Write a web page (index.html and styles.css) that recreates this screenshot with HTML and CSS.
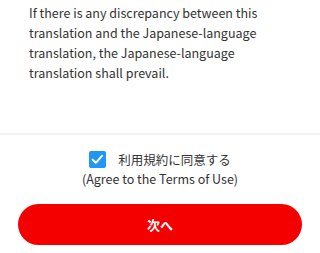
FILE: index.html
```html
<!DOCTYPE html>
<html lang="ja">
<head>
<meta charset="utf-8">
<link rel="stylesheet" href="styles.css">
</head>
<body>
<div class="page">
  <div class="content">
    <p class="note">If there is any discrepancy between this translation and the Japanese-language translation, the Japanese-language translation shall prevail.</p>
  </div>
  <div class="footer">
    <label class="agree">
      <span class="agree-row">
        <span class="checkbox">
          <svg viewBox="0 0 17 17" width="17" height="17"><path d="M3.6 8.6 L6.8 11.8 L13 4.8" fill="none" stroke="#fff" stroke-width="2" stroke-linecap="round" stroke-linejoin="round"/></svg>
        </span>
        <span class="agree-ja">利用規約に同意する</span>
      </span>
      <span class="agree-en">(Agree to the Terms of Use)</span>
    </label>
    <button class="next">次へ</button>
  </div>
</div>
</body>
</html>
```
FILE: styles.css
```css
html, body {
  margin: 0;
  padding: 0;
  background: #fff;
}
body {
  font-family: "Noto Sans CJK JP", "Noto Sans", sans-serif;
  color: #333;
}
.page {
  width: 320px;
  height: 253px;
  display: flex;
  flex-direction: column;
  overflow: hidden;
}
.content {
  padding: 3px 29px 0 29px;
  height: 133px;
  box-sizing: border-box;
}
.note {
  margin: 0;
  font-size: 12.5px;
  line-height: 20px;
  hyphens: manual;
}
.nowrap {
  white-space: nowrap;
}
.footer {
  border-top: 2px solid #f2f2f2;
  display: flex;
  flex-direction: column;
  align-items: center;
  padding-top: 14.5px;
}
.agree {
  display: flex;
  flex-direction: column;
  align-items: center;
  font-size: 12.5px;
  line-height: 19px;
  color: #333;
}
.agree-row {
  display: flex;
  align-items: center;
  gap: 12px;
}
.checkbox {
  width: 17px;
  height: 17px;
  background: #2196f3;
  border-radius: 2px;
  display: flex;
  align-items: center;
  justify-content: center;
}
.checkbox svg {
  display: block;
  width: 17px;
  height: 17px;
}
.next {
  margin-top: 16.5px;
  width: 284px;
  height: 41px;
  border: none;
  border-radius: 21px;
  background: #f50000;
  color: #fff;
  font-family: "Noto Sans CJK JP", sans-serif;
  font-weight: 700;
  font-size: 13px;
  padding: 0;
}
```
